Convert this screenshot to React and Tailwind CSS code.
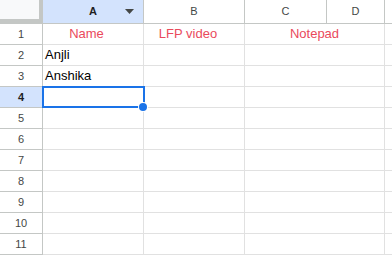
const COLS = [
  { key: "A", w: 101 },
  { key: "B", w: 101 },
  { key: "C", w: 82 },
  { key: "D", w: 58 },
];

const ROWS = [
  { n: 1, a: "Name", b: "LFP video", c: "Notepad", head: true },
  { n: 2, a: "Anjli" },
  { n: 3, a: "Anshika" },
  { n: 4, selected: true },
  { n: 5 },
  { n: 6 },
  { n: 7 },
  { n: 8 },
  { n: 9 },
  { n: 10 },
  { n: 11 },
];

export default function App() {
  return (
    <div className="w-[392px] h-[256px] overflow-hidden bg-white font-['Liberation_Sans',Arial,sans-serif] relative">
      {/* column headers */}
      <div className="flex h-[24px] border-b border-[#c4c7c5]">
        <div className="w-[43px] shrink-0 bg-[#f8f9fa] border-r-4 border-b-4 border-[#c4c7c5] h-[23px]" />
        {COLS.map((c) => (
          <div
            key={c.key}
            className={`shrink-0 relative flex items-center justify-center text-[11px] border-r border-[#c4c7c5] ${
              c.key === "A" ? "bg-[#d3e3fd] text-[#1f1f1f] font-bold" : "text-[#444746]"
            }`}
            style={{ width: c.w }}
          >
            {c.key}
            {c.key === "A" && (
              <svg className="absolute right-[9px] top-[9px]" width="9" height="5" viewBox="0 0 9 5">
                <path d="M0 0h9L4.5 5z" fill="#444746" />
              </svg>
            )}
          </div>
        ))}
        <div className="flex-1" />
      </div>

      {/* rows */}
      {ROWS.map((r) => (
        <div key={r.n} className="flex h-[21px]">
          <div
            className={`w-[43px] shrink-0 flex items-center justify-center text-[11px] border-r border-b border-[#c4c7c5] ${
              r.selected ? "bg-[#d3e3fd] font-bold text-[#1f1f1f]" : "text-[#444746]"
            }`}
          >
            {r.n}
          </div>
          <div
            className={`w-[101px] shrink-0 flex items-center text-[13px] border-r border-b border-[#e1e1e1] ${
              r.head ? "justify-center pr-[13px] text-[#ea4a5c]" : "pl-[2px] text-black"
            }`}
          >
            {r.a}
          </div>
          <div className="w-[101px] shrink-0 flex items-center justify-center pr-[12px] text-[13px] text-[#ea4a5c] border-r border-b border-[#e1e1e1]">
            {r.b}
          </div>
          <div className="w-[140px] shrink-0 flex items-center justify-center text-[13px] text-[#ea4a5c] border-r border-b border-[#e1e1e1]">
            {r.c}
          </div>
          <div className="flex-1 border-b border-[#e1e1e1]" />
        </div>
      ))}

      {/* selection */}
      <div className="absolute left-[42px] top-[86px] w-[103px] h-[22px] border-2 border-[#1a73e8]" />
      <div className="absolute left-[139px] top-[103px] w-[8px] h-[8px] rounded-full bg-[#1a73e8] ring-1 ring-white" />
    </div>
  );
}
